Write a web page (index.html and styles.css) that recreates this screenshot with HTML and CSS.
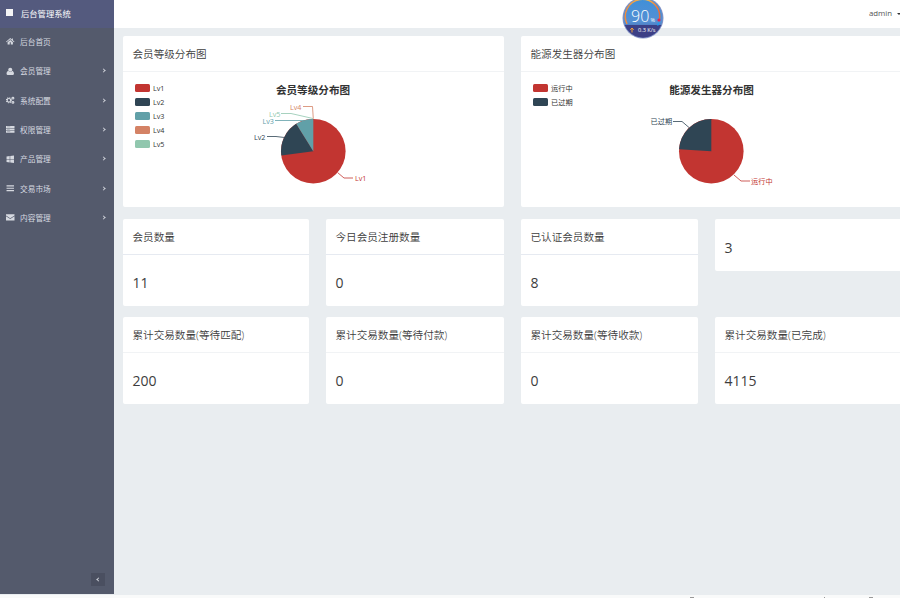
FILE: index.html
```
<!DOCTYPE html>
<html lang="zh-CN">

<head>
    <meta charset="utf-8">
    <title>后台管理系统</title>
    <link rel="stylesheet" href="styles.css">
</head>

<body>
<div class="app">
    <aside class="sidebar">
        <div class="brand"><span class="brand-icon"></span>后台管理系统</div>
        <ul class="nav">
            <li>
                <svg class="icon" viewBox="0 0 16 16"><path d="M8 2 0 9l1 1 7-6 7 6 1-1-3-2.700V3h-2v1.600zM8 5.500 3 9.800V14h4v-4h2v4h4V9.800z"/></svg>
                <span>后台首页</span>
            </li>
            <li>
                <svg class="icon" viewBox="0 0 16 16"><circle cx="8" cy="5" r="3.800"/><path d="M4.500 7C2 8 1 10.500 1 12.500 1 14 2.500 15 4 15h8c1.500 0 3-1 3-2.500 0-2-1-4.500-3.500-5.500-1.500 3-5.500 3-7 0z"/></svg>
                <span>会员管理</span>
                <i class="arrow"></i>
            </li>
            <li>
                <svg class="icon gears" viewBox="0 0 16 16"><circle cx="5.500" cy="8" r="3.300"/><circle class="teeth" cx="5.500" cy="8" r="4.700"/><circle cx="13" cy="4" r="1.700"/><circle cx="13" cy="12" r="1.700"/></svg>
                <span>系统配置</span>
                <i class="arrow"></i>
            </li>
            <li>
                <svg class="icon" viewBox="0 0 16 16"><path d="M0 2h16v3.500H0zM0 6.500h16V10H0zM0 11h16v3.500H0z"/><path class="cut" d="M2 3.500h6M2 8h5M2 12.500h6"/></svg>
                <span>权限管理</span>
                <i class="arrow"></i>
            </li>
            <li>
                <svg class="icon" viewBox="0 0 16 16"><path d="m1 3 6-1v5.500H1zM8 1.800 15 1v6.500H8zM1 8.500h6V14l-6-1zM8 8.500h7V15l-7-1z"/></svg>
                <span>产品管理</span>
                <i class="arrow"></i>
            </li>
            <li>
                <svg class="icon" viewBox="0 0 16 16"><path d="M1 2.500h14v2H1zM1 7h14v2H1zM1 11.500h14v2H1z"/></svg>
                <span>交易市场</span>
                <i class="arrow"></i>
            </li>
            <li>
                <svg class="icon" viewBox="0 0 16 16"><path d="M0 2.500h16v2L8 10 0 4.500zM0 6l8 5.500L16 6v8H0z"/></svg>
                <span>内容管理</span>
                <i class="arrow"></i>
            </li>
        </ul>
        <div class="collapse"><i class="arrow left"></i></div>
    </aside>

    <div class="main">
        <header class="topbar">
            <span>admin</span>
            <i class="caret"></i>
        </header>

        <div class="content">
            <section class="card wide">
                <h2>会员等级分布图</h2>
                <svg class="chart" width="381" height="135" viewBox="0 0 381 135">
                    <g class="legend">
                        <rect class="c1" x="12" y="12" width="15" height="8" rx="1.500"/><text x="30" y="19">Lv1</text>
                        <rect class="c2" x="12" y="26" width="15" height="8" rx="1.500"/><text x="30" y="33">Lv2</text>
                        <rect class="c3" x="12" y="40" width="15" height="8" rx="1.500"/><text x="30" y="47">Lv3</text>
                        <rect class="c4" x="12" y="54" width="15" height="8" rx="1.500"/><text x="30" y="61">Lv4</text>
                        <rect class="c5" x="12" y="68" width="15" height="8" rx="1.500"/><text x="30" y="75">Lv5</text>
                    </g>
                    <text class="chart-title" x="190" y="21.500">会员等级分布图</text>
                    <circle class="c1" cx="190.300" cy="79.200" r="32.300"/>
                    <path class="c2" d="M190.300 79.200 158.300 83.500A32.300 32.300 0 0 1 173.200 51.800z"/>
                    <path class="c3" d="M190.300 79.200 173.200 51.800A32.300 32.300 0 0 1 190.300 46.900z"/>
                    <g class="labels">
                        <path class="l1" d="M214.500 100.500 221 106H230"/><text class="c1" x="232" y="109">Lv1</text>
                        <path class="l2" d="M161.500 65.500 153 64.500H144"/><text class="c2" x="131" y="68">Lv2</text>
                        <path class="l3" d="M181 48.500H152"/><text class="c3" x="139.500" y="51.500">Lv3</text>
                        <path class="l5" d="M190 46.500 168 41.500H158"/><text class="c5" x="146" y="44.500">Lv5</text>
                        <path class="l4" d="M190.300 46.800 189.500 34.500H180"/><text class="c4" x="167" y="37.500">Lv4</text>
                    </g>
                </svg>
            </section>
            <section class="card wide">
                <h2>能源发生器分布图</h2>
                <svg class="chart" width="381" height="135" viewBox="0 0 381 135">
                    <g class="legend">
                        <rect class="c1" x="12" y="12" width="15" height="8" rx="1.500"/><text x="30" y="19">运行中</text>
                        <rect class="c2" x="12" y="26" width="15" height="8" rx="1.500"/><text x="30" y="33">已过期</text>
                    </g>
                    <text class="chart-title" x="190.500" y="21.500">能源发生器分布图</text>
                    <circle class="c1" cx="190.300" cy="79.200" r="32.300"/>
                    <path class="c2" d="M190.300 79.200 158 77.200A32.300 32.300 0 0 1 190.300 46.900z"/>
                    <g class="labels">
                        <path class="l1" d="M213 103 220 109H229"/><text class="c1" x="230" y="112">运行中</text>
                        <path class="l2" d="M168 55.500 161 49.500H152"/><text class="c2" x="129.500" y="52">已过期</text>
                    </g>
                </svg>
            </section>

            <section class="card stat"><h2>会员数量</h2><p>11</p></section>
            <section class="card stat"><h2>今日会员注册数量</h2><p>0</p></section>
            <section class="card stat"><h2>已认证会员数量</h2><p>8</p></section>
            <section class="card untitled"><p>3</p></section>

            <section class="card"><h2>累计交易数量(等待匹配)</h2><p>200</p></section>
            <section class="card"><h2>累计交易数量(等待付款)</h2><p>0</p></section>
            <section class="card"><h2>累计交易数量(等待收款)</h2><p>0</p></section>
            <section class="card"><h2>累计交易数量(已完成)</h2><p>4115</p></section>
        </div>
    </div>

    <!-- floating speed meter -->
    <svg class="meter" width="44" height="44" viewBox="0 0 44 44">
        <defs>
            <linearGradient id="ball" x1="0" y1="0" x2="0" y2="1">
                <stop offset="0" stop-color="#3f8fd8"/>
                <stop offset=".6" stop-color="#5590d4"/>
                <stop offset="1" stop-color="#3c3f8c"/>
            </linearGradient>
            <linearGradient id="arc" x1="0" y1="0" x2="1" y2="0">
                <stop offset="0" stop-color="#f08a3c"/>
                <stop offset=".6" stop-color="#f5c24e"/>
                <stop offset="1" stop-color="#ee6a35"/>
            </linearGradient>
            <clipPath id="ballClip"><circle cx="22" cy="19" r="19.500"/></clipPath>
        </defs>
        <circle class="meter-rim" cx="22" cy="19" r="20.500"/>
        <circle cx="22" cy="19" r="19.500" fill="url(#ball)"/>
        <rect class="meter-base" x="0" y="26" width="44" height="16" clip-path="url(#ballClip)"/>
        <path d="M6 25A17.200 17.200 0 1 1 38.500 20" fill="none" stroke="url(#arc)" stroke-width="1.500"/>
        <circle cx="38" cy="21" r="1.600" fill="#e8224f"/>
        <path d="M38 23.500 36.500 26.500" stroke="#1d9bf0" stroke-width="1.500"/>
        <text class="meter-value" x="10" y="22.500">90</text>
        <text class="meter-unit" x="29.500" y="22.500">%</text>
        <path d="M11 33.500V29M9.300 30.800 11 29l1.700 1.800" fill="none" stroke="#f2a13c"/>
        <text class="meter-speed" x="17" y="33.300">0.3 K/s</text>
    </svg>
</div>
<footer class="footer"><i></i><i></i><i></i></footer>
</body>

</html>
```
FILE: styles.css
```
* {
    box-sizing: border-box;
}

body {
    margin: 0;
    height: 598px;
    overflow: hidden;
    background: #f9fafa;
    color: #3d3d3d;
    font-family: "Open Sans", "Noto Sans CJK SC", sans-serif;
    font-size: 8px;
}

.app {
    position: relative;
    display: flex;
    height: 595px;
    background: #e9edf0;
}

/* sidebar */
.sidebar {
    display: flex;
    flex-direction: column;
    width: 114px;
    height: 594px;
    background: #545a6c;
    color: #d6d9e0;
}
.brand {
    display: flex;
    align-items: center;
    height: 27.5px;
    padding: 0 0 2px 6px;
    background: #545a7e;
    color: #fff;
    font-size: 8.3px;
}
.brand-icon {
    width: 7px;
    height: 7px;
    margin-right: 8px;
    background: #f4f4f6;
}
.nav {
    flex: 1;
    margin: 0;
    padding: 0;
    list-style: none;
}
.nav li {
    display: flex;
    align-items: center;
    height: 29.3px;
    padding: 0 9px 1px 6px;
    font-size: 7.7px;
}
.icon {
    width: 8.5px;
    height: 8.5px;
    margin-right: 5.5px;
    fill: #d6d9e0;
}
.gears circle {
    fill: none;
    stroke: #d6d9e0;
    stroke-width: 2.2;
}
.gears .teeth {
    stroke-dasharray: 1.9 1.8;
}
.cut {
    stroke: #7d8290;
}
.arrow {
    width: 3px;
    height: 3px;
    margin-left: auto;
    border: solid #cdd0d8;
    border-width: 1px 1px 0 0;
    transform: rotate(45deg);
    box-sizing: border-box;
}
.arrow.left {
    margin: 0 -1px 0 0;
    transform: rotate(225deg);
}
.collapse {
    display: flex;
    align-items: center;
    justify-content: center;
    width: 14px;
    height: 13px;
    margin: 0 9px 8px auto;
    background: #4a4f60;
}

/* main area */
.main {
    flex: 1;
    min-width: 0;
    overflow: hidden;
}
.topbar {
    display: flex;
    align-items: center;
    justify-content: flex-end;
    height: 27.5px;
    padding-bottom: 1px;
    background: #fff;
    color: #555;
    font-size: 7.8px;
}
.caret {
    margin: 1px -1px 0 5px;
    border: 2.5px solid transparent;
    border-top-color: #333;
    border-bottom: 0;
}
.content {
    display: grid;
    grid-template-columns: 186px 178px 177px 195px;
    grid-template-rows: 171px 87px 86.6px;
    gap: 11.7px 17px;
    padding: 8.5px 0 0 9px;
}
.card {
    background: #fff;
    border-radius: 2px;
}
.wide {
    grid-column: span 2;
}
.card h2 {
    height: 36px;
    margin: 0;
    padding-left: 9.5px;
    border-bottom: 1px solid #f1f3f5;
    font-size: 10.6px;
    font-weight: 350;
    line-height: 36px;
}
.stat h2 {
    border-bottom-color: #e6eaf1;
}
.card p {
    margin: 0;
    padding: 18px 0 0 9.5px;
    font-size: 14px;
    line-height: 20px;
}
.card.untitled {
    height: 52px;
    padding-top: 1px;
}

/* charts */
.chart {
    display: block;
    font-size: 7.2px;
}
.legend text {
    fill: #333;
}
.chart-title {
    fill: #333;
    font-size: 10.6px;
    font-weight: 700;
    text-anchor: middle;
}
.labels path {
    fill: none;
    stroke-width: .8;
}
.c1 { fill: #c23531; }
.c2 { fill: #2f4554; }
.c3 { fill: #61a0a8; }
.c4 { fill: #d48265; }
.c5 { fill: #91c7ae; }
.l1 { stroke: #c23531; }
.l2 { stroke: #2f4554; }
.l3 { stroke: #61a0a8; }
.l4 { stroke: #d48265; }
.l5 { stroke: #91c7ae; }

.meter {
    position: absolute;
    top: -1px;
    left: 621px;
}
.meter-rim {
    fill: #8492c5;
}
.meter-base {
    fill: #3c3f86;
}
.meter text {
    fill: #fff;
}
.meter-value {
    font-size: 16px;
    font-weight: 300;
}
.meter-unit {
    font-size: 5.5px;
}
.meter-speed {
    font-size: 5.6px;
}

.footer {
    display: flex;
    align-items: flex-end;
    height: 3px;
    padding-left: 690px;
}
.footer i {
    width: 4px;
    height: 1px;
    background: #999;
}
.footer i:nth-child(2) {
    width: 1px;
    margin: 0 44px 0 130px;
}
```
